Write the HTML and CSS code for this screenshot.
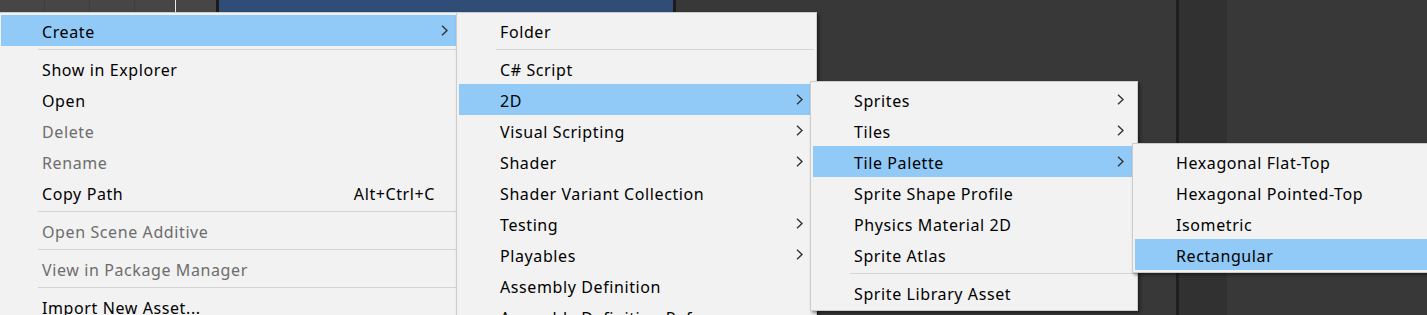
FILE: index.html
```html
<!DOCTYPE html>
<html>
<head>
<meta charset="utf-8">
<link rel="stylesheet" href="styles.css">
</head>
<body>
<div class="desk">
  <div class="main">
    <div class="strip">
      <div class="tab"></div><div class="tab"></div><div class="tab"></div><div class="tab last"></div>
      <div class="tab-white"></div>
      <div class="tab gap"></div>
      <div class="edge"></div>
      <div class="scene-tab"></div>
      <div class="edge"></div>
    </div>
  </div>
  <div class="vline"></div>
  <div class="band"></div>
  <div class="rest"></div>
</div>

<div class="menu m1">
  <div class="item hl"><span class="label">Create</span><svg class="chev" width="7" height="11" viewBox="0 0 7 11"><polyline points="1,0.8 6,5.5 1,10.2"/></svg></div>
  <div class="sep"></div>
  <div class="item"><span class="label">Show in Explorer</span></div>
  <div class="item"><span class="label">Open</span></div>
  <div class="item dis"><span class="label">Delete</span></div>
  <div class="item dis"><span class="label">Rename</span></div>
  <div class="item"><span class="label">Copy Path</span><span class="short">Alt+Ctrl+C</span></div>
  <div class="sep"></div>
  <div class="item dis"><span class="label">Open Scene Additive</span></div>
  <div class="sep"></div>
  <div class="item dis"><span class="label">View in Package Manager</span></div>
  <div class="sep"></div>
  <div class="item"><span class="label">Import New Asset...</span></div>
</div>

<div class="menu m2">
  <div class="item"><span class="label">Folder</span></div>
  <div class="sep"></div>
  <div class="item"><span class="label">C# Script</span></div>
  <div class="item hl"><span class="label">2D</span><svg class="chev" width="7" height="11" viewBox="0 0 7 11"><polyline points="1,0.8 6,5.5 1,10.2"/></svg></div>
  <div class="item"><span class="label">Visual Scripting</span><svg class="chev" width="7" height="11" viewBox="0 0 7 11"><polyline points="1,0.8 6,5.5 1,10.2"/></svg></div>
  <div class="item"><span class="label">Shader</span><svg class="chev" width="7" height="11" viewBox="0 0 7 11"><polyline points="1,0.8 6,5.5 1,10.2"/></svg></div>
  <div class="item"><span class="label">Shader Variant Collection</span></div>
  <div class="item"><span class="label">Testing</span><svg class="chev" width="7" height="11" viewBox="0 0 7 11"><polyline points="1,0.8 6,5.5 1,10.2"/></svg></div>
  <div class="item"><span class="label">Playables</span><svg class="chev" width="7" height="11" viewBox="0 0 7 11"><polyline points="1,0.8 6,5.5 1,10.2"/></svg></div>
  <div class="item"><span class="label">Assembly Definition</span></div>
  <div class="item"><span class="label">Assembly Definition Reference</span></div>
</div>

<div class="menu m3">
  <div class="item"><span class="label">Sprites</span><svg class="chev" width="7" height="11" viewBox="0 0 7 11"><polyline points="1,0.8 6,5.5 1,10.2"/></svg></div>
  <div class="item"><span class="label">Tiles</span><svg class="chev" width="7" height="11" viewBox="0 0 7 11"><polyline points="1,0.8 6,5.5 1,10.2"/></svg></div>
  <div class="item hl"><span class="label">Tile Palette</span><svg class="chev" width="7" height="11" viewBox="0 0 7 11"><polyline points="1,0.8 6,5.5 1,10.2"/></svg></div>
  <div class="item"><span class="label">Sprite Shape Profile</span></div>
  <div class="item"><span class="label">Physics Material 2D</span></div>
  <div class="item"><span class="label">Sprite Atlas</span></div>
  <div class="sep"></div>
  <div class="item"><span class="label">Sprite Library Asset</span></div>
</div>

<div class="menu m4">
  <div class="item"><span class="label">Hexagonal Flat-Top</span></div>
  <div class="item"><span class="label">Hexagonal Pointed-Top</span></div>
  <div class="item"><span class="label">Isometric</span></div>
  <div class="item hl"><span class="label">Rectangular</span></div>
</div>
</body>
</html>
```
FILE: styles.css
```css
html, body {
  margin: 0;
  padding: 0;
}
body {
  width: 1427px;
  height: 315px;
  overflow: hidden;
  position: relative;
  background: #383838;
  font-family: "Noto Sans", "Open Sans", sans-serif;
}
.desk {
  display: flex;
  height: 315px;
}
.main {
  width: 1176px;
  background: #383838;
}
.strip {
  display: flex;
  height: 12px;
}
.tab {
  width: 44px;
  background: #464646;
  border-right: 1px solid #3e3e3e;
}
.tab.last {
  width: 40px;
  border-right: none;
}
.tab-white {
  width: 1px;
  background: #e8e8e8;
}
.tab.gap {
  width: 40px;
  border-right: none;
}
.edge {
  width: 3px;
  background: #1b1b1b;
}
.scene-tab {
  width: 454px;
  background: #2f4d77;
}
.vline {
  width: 3px;
  background: #1e1e1e;
}
.band {
  width: 48px;
  background: #313131;
}
.rest {
  flex: 1;
  background: #383838;
}

.menu {
  position: absolute;
  background: #f2f2f2;
  border: 1px solid #cccccc;
  padding: 2px;
  box-shadow: 2px 2px 3px rgba(0, 0, 0, 0.45);
  display: flex;
  flex-direction: column;
  box-sizing: border-box;
}
.m1 { left: -2px; top: 12px; width: 464px; z-index: 1; }
.m2 { left: 456px; top: 12px; width: 361px; z-index: 2; }
.m3 { left: 810px; top: 81px; width: 328px; z-index: 3; }
.m4 { left: 1132px; top: 143px; width: 320px; z-index: 4; }

.item {
  height: 31px;
  box-sizing: border-box;
  padding: 3px 11px 0 41px;
  display: flex;
  align-items: center;
  line-height: 28px;
  font-size: 16px;
  letter-spacing: 0.6px;
  color: #000;
  flex-shrink: 0;
}
.item .label {
  flex: 1;
  white-space: nowrap;
}
.item.hl {
  background: #91c9f7;
}
.item.dis {
  color: #6d6d6d;
}
.short {
  margin-right: 13px;
  white-space: nowrap;
}
.chev {
  margin-top: -3px;
  flex-shrink: 0;
}
.chev polyline {
  fill: none;
  stroke: #333333;
  stroke-width: 1.4;
}
.sep {
  height: 7px;
  flex-shrink: 0;
  box-sizing: border-box;
  padding-top: 3px;
  padding-left: 37px;
}
.sep::before {
  content: "";
  display: block;
  height: 1px;
  background: #d4d4d4;
}
```
